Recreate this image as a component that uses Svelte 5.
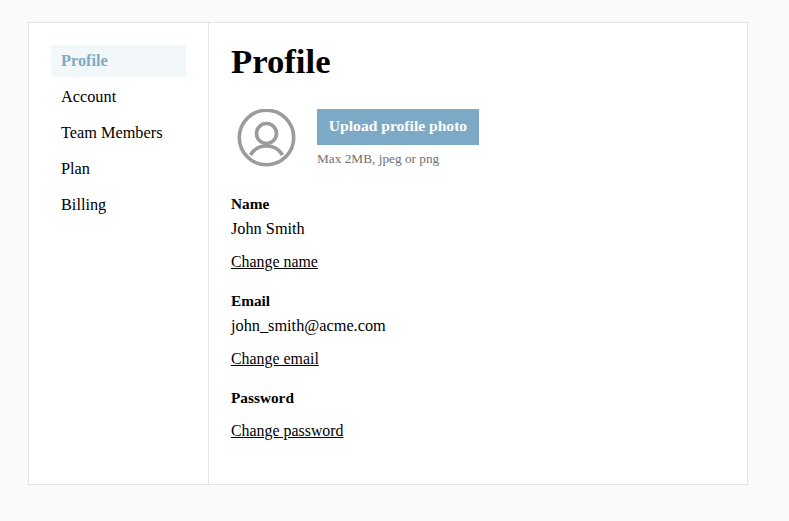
<script>
	const links = ['Profile', 'Account', 'Team Members', 'Plan', 'Billing'];
	const fields = [
		{ label: 'Name', value: 'John Smith', action: 'Change name' },
		{ label: 'Email', value: 'john_smith@acme.com', action: 'Change email' },
		{ label: 'Password', action: 'Change password' }
	];
</script>

<div class="page">
	<div class="card">
		<nav class="sidebar">
			{#each links as link, i}
				<a href="#top" class="nav-link" class:active={i === 0}>{link}</a>
			{/each}
		</nav>

		<main class="content">
			<h1>Profile</h1>

			<div class="photo-row">
				<svg class="avatar" width="60" height="58" viewBox="0 0 60 58" fill="none" stroke="#9b9b9b" stroke-width="3.600">
					<circle cx="30.500" cy="28.500" r="27.200" />
					<circle cx="30.500" cy="24.500" r="10" />
					<path d="M14.500 46C18 40 24 37 30.500 37S43 40 46.500 46" />
				</svg>
				<div>
					<button class="upload">Upload profile photo</button>
					<p class="hint">Max 2MB, jpeg or png</p>
				</div>
			</div>

			{#each fields as field}
				<section class="field">
					<h2>{field.label}</h2>
					{#if field.value}
						<p class="value">{field.value}</p>
					{/if}
					<a href="#top" class="change">{field.action}</a>
				</section>
			{/each}
		</main>
	</div>
</div>

<style>
	:global(body) {
		margin: 0;
		background: #fafafa;
	}

	.page {
		padding: 22px 41px 36px 28px;
		font-family: 'Liberation Serif', 'Times New Roman', serif;
		font-size: 16.300px;
		color: #000;
	}

	.card {
		display: flex;
		height: 461px;
		background: #fff;
		border: 1px solid #e3e3e3;
	}

	.sidebar {
		width: 180px;
		box-sizing: border-box;
		flex-shrink: 0;
		padding: 22px 22px 0;
		display: flex;
		flex-direction: column;
		gap: 4px;
		border-right: 1px solid #e3e3e3;
	}

	.nav-link {
		height: 32px;
		line-height: 31px;
		padding: 0 10px;
		color: #000;
		text-decoration: none;
	}

	.active {
		background: #f2f7fa;
		color: #7caac6;
		font-weight: 700;
	}

	.content {
		flex: 1;
		padding: 0 22px;
	}

	h1 {
		margin: 18px 0 0;
		font-size: 34.700px;
		line-height: 42px;
		font-weight: 700;
	}

	.photo-row {
		display: flex;
		align-items: flex-start;
		gap: 21px;
		margin-top: 26px;
	}

	.avatar {
		display: block;
		margin-left: 5px;
		flex-shrink: 0;
	}

	.upload {
		display: block;
		width: 162px;
		height: 36px;
		padding: 0 0 2px;
		border: none;
		background: #7caac6;
		color: #fff;
		font-family: inherit;
		font-size: 15.600px;
		font-weight: 700;
	}

	.hint {
		margin: 6px 0 0;
		font-size: 13.300px;
		line-height: 16px;
		color: #6f6f6f;
	}

	.field {
		margin-bottom: 19px;
	}

	.photo-row + .field {
		margin-top: 27px;
	}

	h2 {
		margin: 0;
		font-size: 15.300px;
		line-height: 20px;
		font-weight: 700;
	}

	.value {
		margin: 5px 0 0;
		line-height: 20px;
	}

	.change {
		display: inline-block;
		margin-top: 13px;
		font-size: 15.900px;
		line-height: 20px;
		color: #000;
		text-decoration: underline;
	}
</style>
